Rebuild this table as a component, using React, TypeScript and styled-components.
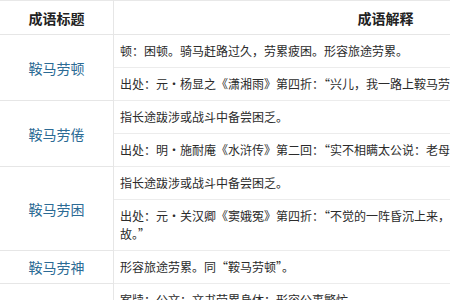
import React from "react";
import styled, { createGlobalStyle } from "styled-components";

const GlobalStyle = createGlobalStyle`
  html, body {
    margin: 0;
    padding: 0;
    background: #ffffff;
    overflow: hidden;
  }
  body {
    font-family: "Noto Sans CJK SC", "Noto Sans", sans-serif;
  }
`;

const Table = styled.table`
  border-collapse: collapse;
  width: 658px;
  table-layout: fixed;
  color: #2b2b2b;
  font-size: 12px;
  line-height: 18px;
`;

const HeadCell = styled.th<{ $w?: number }>`
  width: ${(p) => (p.$w ? `${p.$w}px` : "auto")};
  height: 33px;
  padding: 0;
  font-size: 14px;
  font-weight: 700;
  color: #222222;
  text-align: center;
  vertical-align: middle;
  border-top: 1px solid #e8e8e8;
  border-bottom: 1px solid #e6e6e6;
  border-right: 1px solid #e6e6e6;
`;

const TitleCell = styled.td`
  padding: 0;
  text-align: center;
  vertical-align: middle;
  font-size: 14px;
  color: #2c6b95;
  border-bottom: 1px solid #e6e6e6;
  border-right: 1px solid #e6e6e6;
`;

const TextCell = styled.td`
  padding: 7px 6px 7px 6px;
  text-align: left;
  vertical-align: middle;
  white-space: nowrap;
  overflow: hidden;
  border-bottom: 1px solid #ececec;
`;

type Entry = {
  title: string;
  lines: React.ReactNode[];
};

const entries: Entry[] = [
  {
    title: "鞍马劳顿",
    lines: [
      "顿：困顿。骑马赶路过久，劳累疲困。形容旅途劳累。",
      "出处：元・杨显之《潇湘雨》第四折：“兴儿，我一路上鞍马劳顿，身体困乏。”",
    ],
  },
  {
    title: "鞍马劳倦",
    lines: [
      "指长途跋涉或战斗中备尝困乏。",
      "出处：明・施耐庵《水浒传》第二回：“实不相瞒太公说：老母鞍马劳倦，昨夜心痛病发。”",
    ],
  },
  {
    title: "鞍马劳困",
    lines: [
      "指长途跋涉或战斗中备尝困乏。",
      <>
        出处：元・关汉卿《窦娥冤》第四折：“不觉的一阵昏沉上来，皆因鞍马劳困的缘
        <br />
        故。”
      </>,
    ],
  },
  {
    title: "鞍马劳神",
    lines: ["形容旅途劳累。同“鞍马劳顿”。"],
  },
  {
    title: "案牍劳形",
    lines: [
      "案牍：公文；文书劳累身体；形容公事繁忙。",
      "出处：唐・刘禹锡《陋室铭》：“无丝竹之乱耳，无案牍之劳形。”",
    ],
  },
];

export default function App() {
  return (
    <>
      <GlobalStyle />
      <Table>
        <thead>
          <tr>
            <HeadCell $w={113}>成语标题</HeadCell>
            <HeadCell>成语解释</HeadCell>
          </tr>
        </thead>
        <tbody>
          {entries.map((item) =>
            item.lines.map((line, i) => (
              <tr key={`${item.title}-${i}`}>
                {i === 0 && (
                  <TitleCell rowSpan={item.lines.length}>
                    {item.title}
                  </TitleCell>
                )}
                <TextCell>{line}</TextCell>
              </tr>
            ))
          )}
        </tbody>
      </Table>
    </>
  );
}
